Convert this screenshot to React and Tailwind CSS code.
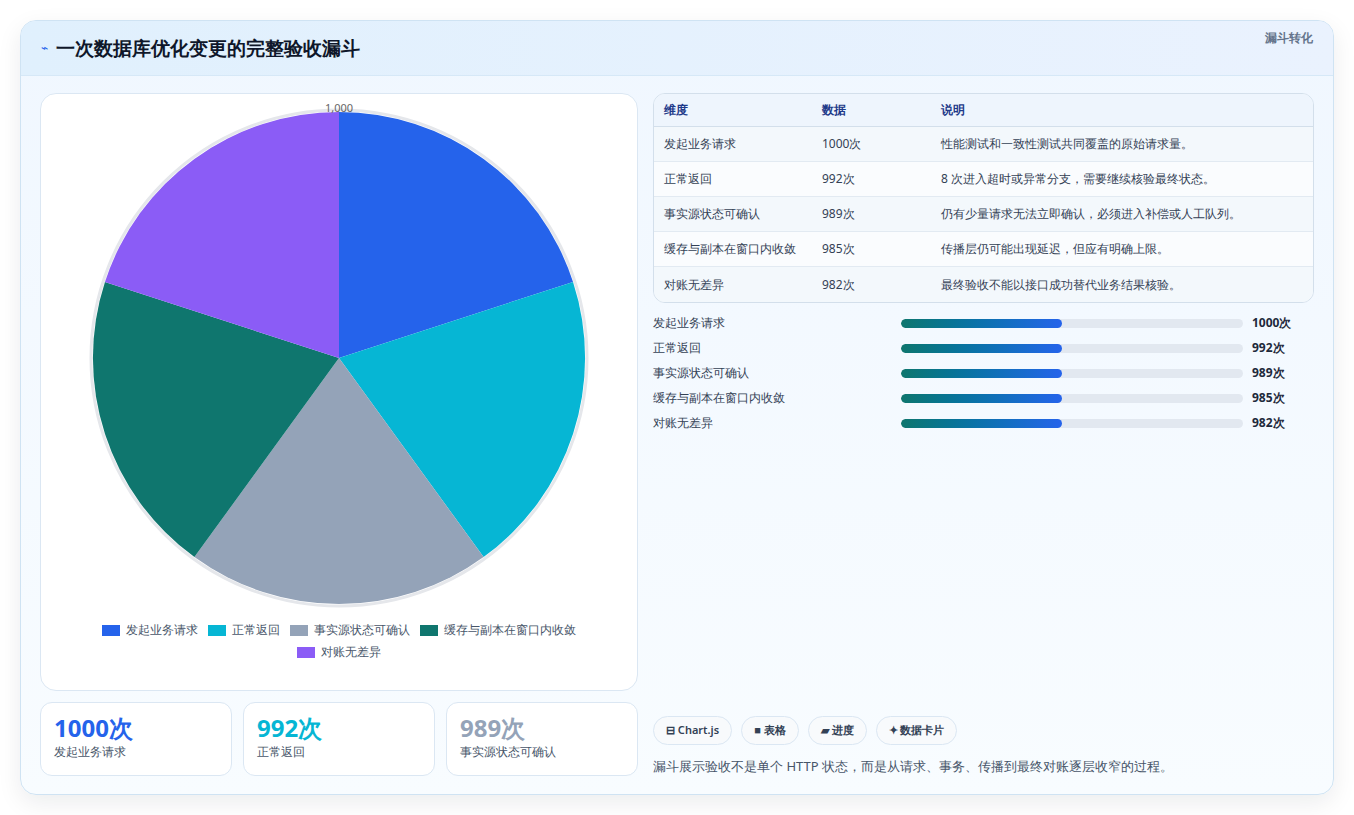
import React from 'react';

const rows = [
  { name: '发起业务请求', v: '1000次', d: '性能测试和一致性测试共同覆盖的原始请求量。' },
  { name: '正常返回', v: '992次', d: '8 次进入超时或异常分支，需要继续核验最终状态。' },
  { name: '事实源状态可确认', v: '989次', d: '仍有少量请求无法立即确认，必须进入补偿或人工队列。' },
  { name: '缓存与副本在窗口内收敛', v: '985次', d: '传播层仍可能出现延迟，但应有明确上限。' },
  { name: '对账无差异', v: '982次', d: '最终验收不能以接口成功替代业务结果核验。' },
];

const legend = [
  ['发起业务请求', 'bg-[#2563eb]'],
  ['正常返回', 'bg-[#06b6d4]'],
  ['事实源状态可确认', 'bg-[#94a3b8]'],
  ['缓存与副本在窗口内收敛', 'bg-[#0f766e]'],
  ['对账无差异', 'bg-[#8b5cf6]'],
];

const Pie = () => (
  <svg width="500" height="500" viewBox="-4 -4 508 508" className="block">
    <circle cx="250" cy="250" r="252" fill="none" stroke="#e5e7eb" strokeWidth="3" />
    <path d="M250 250 L250 0 A250 250 0 0 1 487.8 172.75 Z" fill="#2563eb" />
    <path d="M250 250 L487.8 172.75 A250 250 0 0 1 396.9 452.25 Z" fill="#06b6d4" />
    <path d="M250 250 L396.9 452.25 A250 250 0 0 1 103.1 452.25 Z" fill="#94a3b8" />
    <path d="M250 250 L103.1 452.25 A250 250 0 0 1 12.2 172.75 Z" fill="#0f766e" />
    <path d="M250 250 L12.2 172.75 A250 250 0 0 1 250 0 Z" fill="#8b5cf6" />
  </svg>
);

export default function App() {
  return (
    <div className="min-h-[815px] bg-white px-5 py-5 font-['Noto_Sans','Noto_Sans_CJK_SC',sans-serif]">
      <div className="rounded-2xl border border-[#cfe3f3] bg-gradient-to-b from-[#f0f7ff] to-[#f8fcff] shadow-[0_8px_24px_rgba(15,23,42,0.08)] overflow-hidden">
        <div className="h-[55px] flex items-center justify-between px-5 bg-gradient-to-r from-[#e0f0fd] to-[#eaf2fe] border-b border-[#d6e8f7]">
          <div className="flex items-center gap-2">
            <span className="text-[#2563eb] text-xs">⌁</span>
            <h1 className="text-[19px] font-bold text-[#0f172a]">一次数据库优化变更的完整验收漏斗</h1>
          </div>
          <span className="text-xs font-semibold text-[#64748b] -mt-5">漏斗转化</span>
        </div>
        <div className="flex gap-[15px] px-[19px] pt-[17px] pb-[18px]">
          <div className="w-[598px] flex flex-col gap-[11px]">
            <div className="h-[598px] rounded-2xl border border-[#dbe7f3] bg-white flex flex-col items-center">
              <div className="relative mt-[14px]">
                <span className="absolute left-1/2 -translate-x-1/2 -top-[8px] text-[11px] text-[#666] font-['Liberation_Sans',sans-serif]">1,000</span>
                <Pie />
              </div>
              <div className="mt-[14px] flex flex-wrap justify-center gap-x-[10px] gap-y-[6px] w-[500px] text-xs text-[#475569]">
                {legend.map(([l, c]) => (
                  <span key={l} className="flex items-center gap-[6px]">
                    <span className={`w-[18px] h-[11px] ${c}`} />
                    {l}
                  </span>
                ))}
              </div>
            </div>
            <div className="grid grid-cols-3 gap-[11px]">
              {[['1000次', '发起业务请求', 'text-[#2563eb]'], ['992次', '正常返回', 'text-[#06b6d4]'], ['989次', '事实源状态可确认', 'text-[#94a3b8]']].map(([v, l, c]) => (
                <div key={l} className="h-[74px] rounded-xl border border-[#dbe7f3] bg-white px-[13px] pt-[9px]">
                  <div className={`text-[24px] font-bold leading-8 ${c}`}>{v}</div>
                  <div className="text-xs text-[#475569]">{l}</div>
                </div>
              ))}
            </div>
          </div>
          <div className="flex-1 flex flex-col">
            <div className="rounded-xl border border-[#d3dfeb] overflow-hidden bg-[#f7fbfe] text-xs">
              <div className="flex h-[33px] items-center bg-[#eef5fd] border-b border-[#d3dfeb] font-semibold text-[#1e3a8a]">
                <div className="w-[168px] pl-[10px]">维度</div>
                <div className="w-[119px]">数据</div>
                <div>说明</div>
              </div>
              {rows.map((r, i) => (
                <div key={r.name} className={`flex h-[35px] items-center text-[#334155] ${i < 4 ? 'border-b border-[#e2eaf2]' : ''} ${i % 2 ? 'bg-[#fafcfe]' : 'bg-[#f3f8fc]'}`}>
                  <div className="w-[168px] pl-[10px]">{r.name}</div>
                  <div className="w-[119px]">{r.v}</div>
                  <div>{r.d}</div>
                </div>
              ))}
            </div>
            <div className="mt-[12px] flex flex-col gap-[9px] text-xs">
              {rows.map(r => (
                <div key={r.name} className="flex items-center h-4">
                  <div className="w-[248px] text-[#334155]">{r.name}</div>
                  <div className="w-[342px] h-[9px] rounded-full bg-[#e2e8f0] overflow-hidden">
                    <div className="h-full w-[47%] rounded-full bg-gradient-to-r from-[#0f766e] to-[#2563eb]" />
                  </div>
                  <div className="ml-[9px] font-bold text-[#1e293b]">{r.v}</div>
                </div>
              ))}
            </div>
            <div className="mt-auto">
              <div className="flex gap-[9px] text-[11px] font-semibold text-[#334155]">
                {['⊟ Chart.js', '■ 表格', '▰ 进度', '✦ 数据卡片'].map(t => (
                  <span key={t} className="h-[29px] px-[12px] flex items-center rounded-full border border-[#dbe7f3] bg-[#f8fafc]">{t}</span>
                ))}
              </div>
              <p className="mt-[12px] text-[13px] text-[#475569]">漏斗展示验收不是单个 HTTP 状态，而是从请求、事务、传播到最终对账逐层收窄的过程。</p>
            </div>
          </div>
        </div>
      </div>
    </div>
  );
}
